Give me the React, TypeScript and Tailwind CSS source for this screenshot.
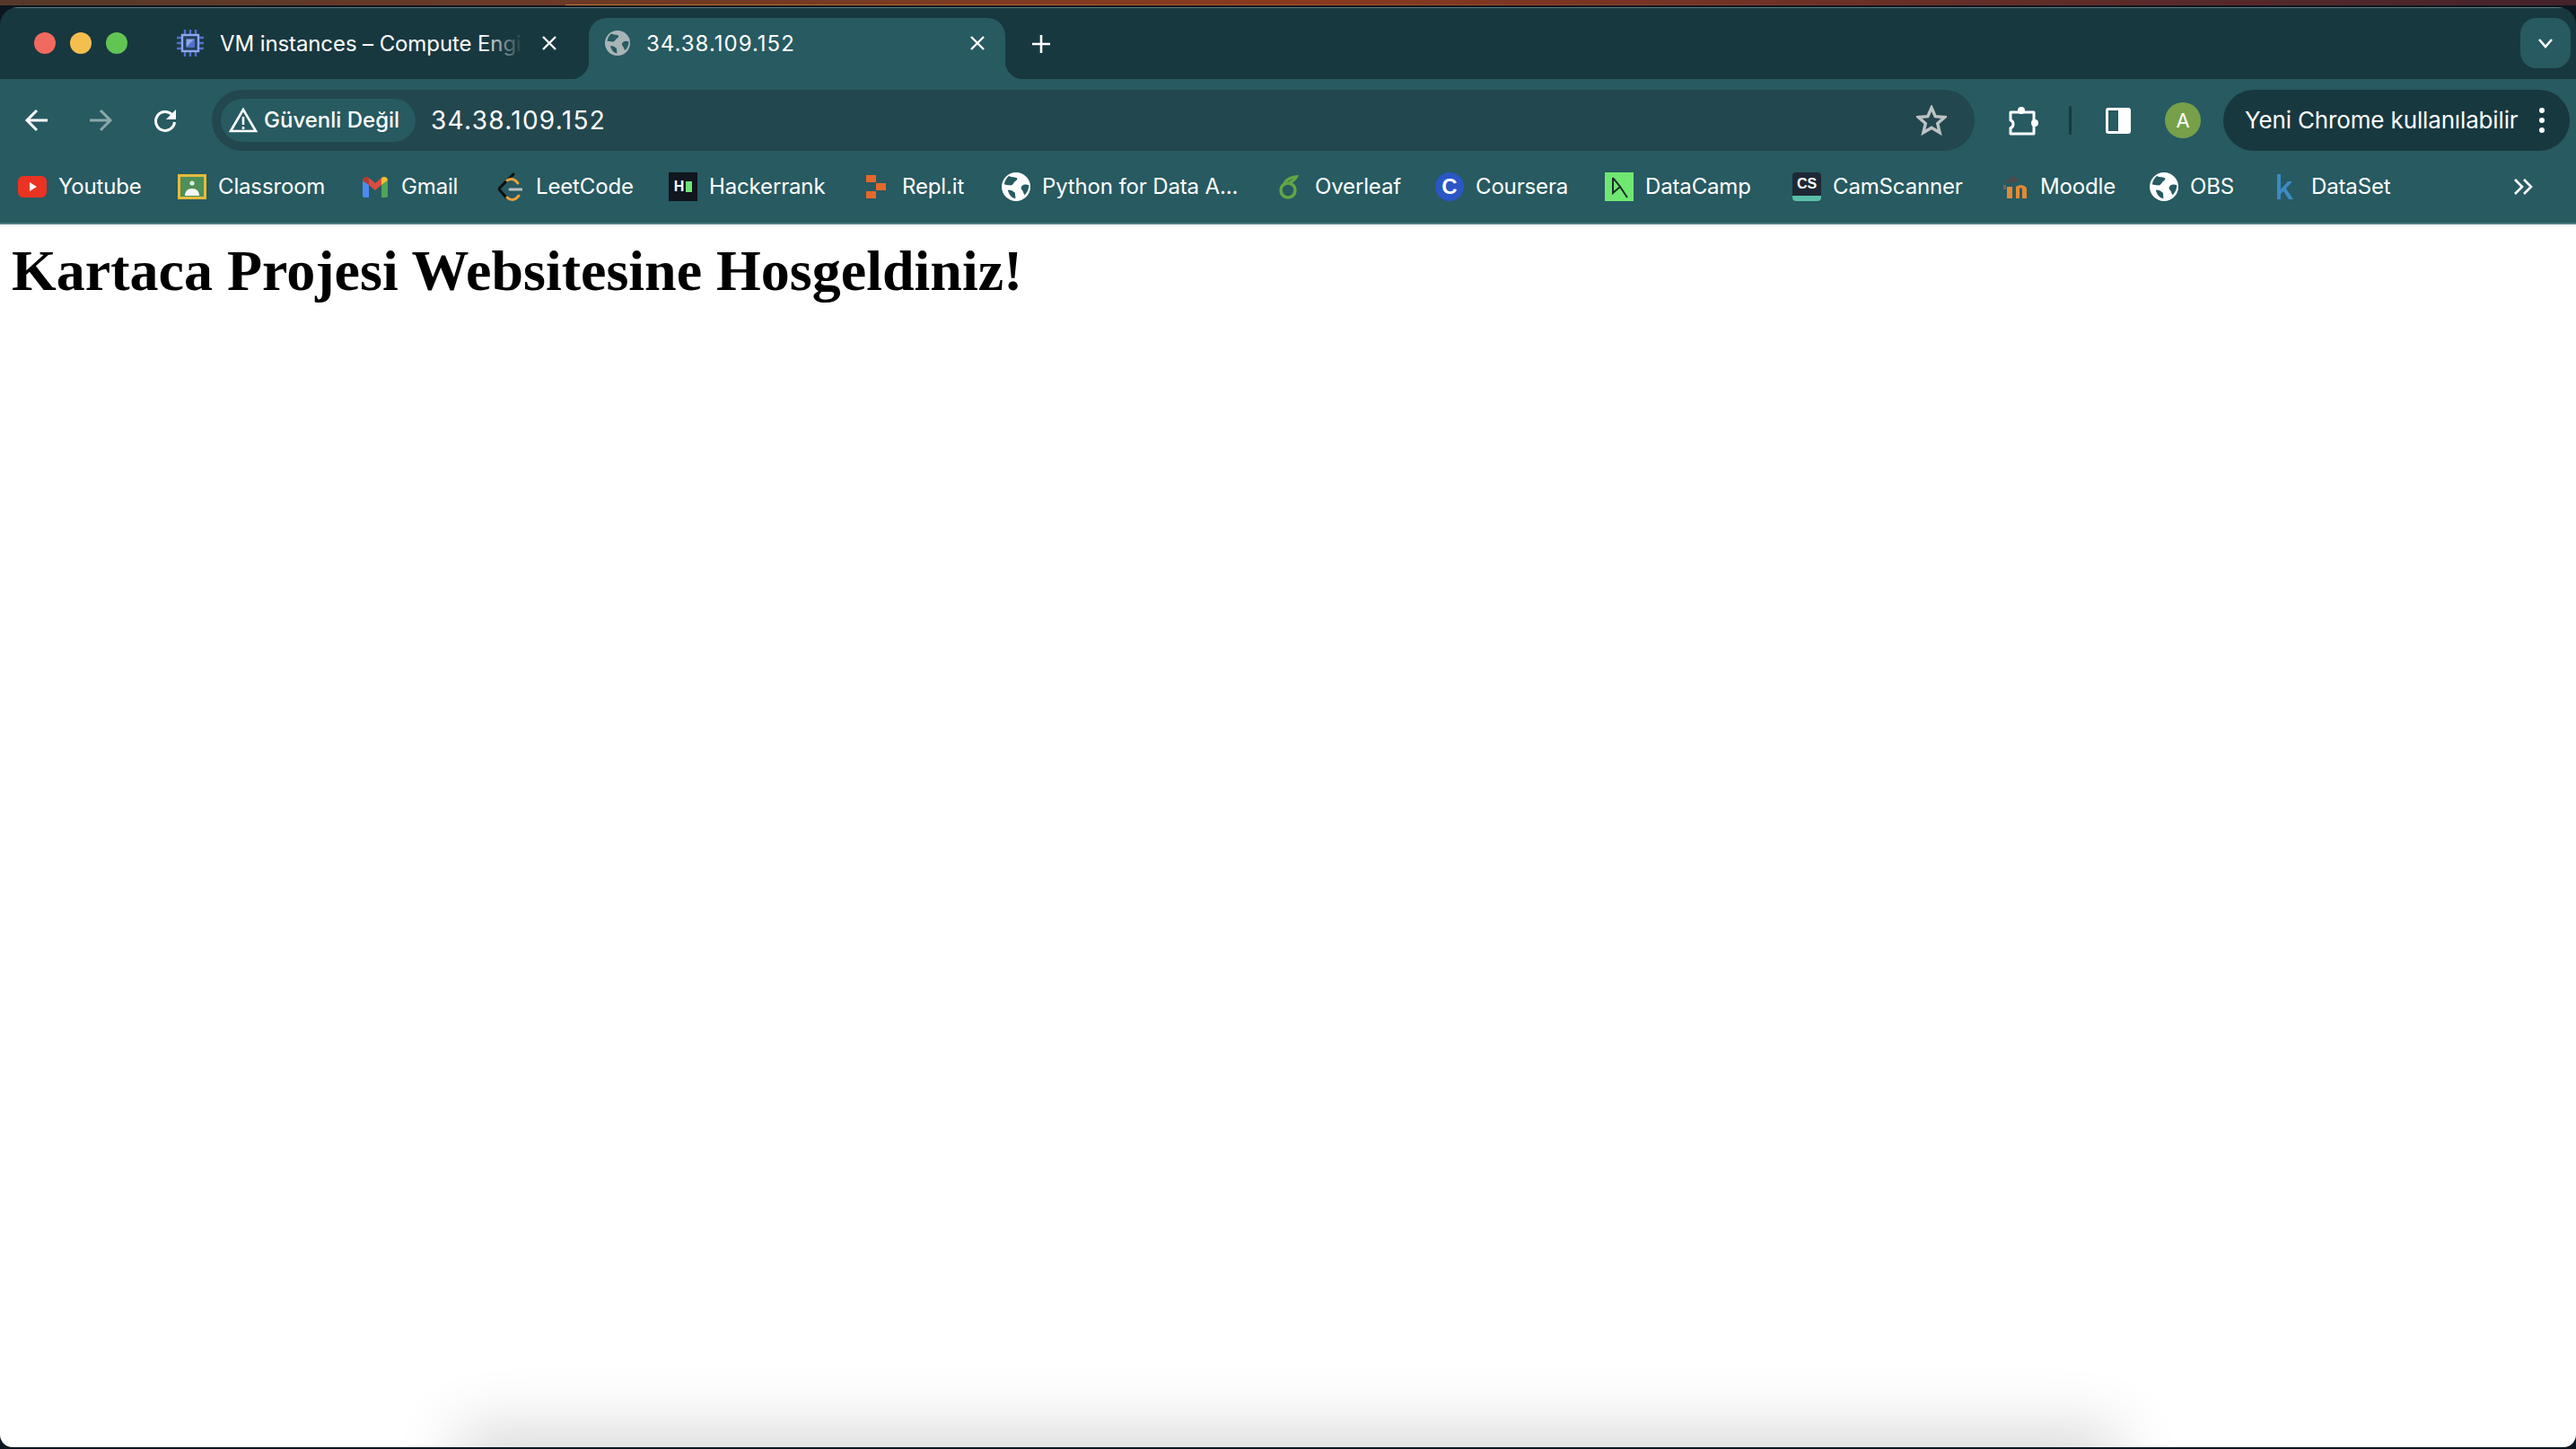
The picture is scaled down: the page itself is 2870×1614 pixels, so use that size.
import React from "react";

const sans = "font-['Inter','Noto_Sans',sans-serif]";

function Globe({ className, color }: { className: string; color: string }) {
  return (
    <svg viewBox="0 0 28 28" className={className}>
      <circle cx="14" cy="14" r="14" fill={color} />
      <path d="M7 3.500c3 1.500 6 1 8 2 1 2-2 3-3 4.500s-2 3-4 2.500-4 0-5.500-1c.5-3 2-6 4.500-8z" fill="#275a61" />
      <path d="M20 13c2-1.500 4.500-1.500 6.500-.5 0 4-1.500 7-4 9.500-1.500-1-1-3-2.500-4.500-1.500-1-1.500-3 0-4.500z" fill="#275a61" />
      <path d="M6 17c3 0 5 1 7 3l.5 5.500C10 25 7 22 6 17z" fill="#275a61" />
    </svg>
  );
}

const Youtube = () => (
  <svg viewBox="0 0 32 32" className="h-8 w-8">
    <rect x="0" y="4" width="32" height="24" rx="6" fill="#ea3323" />
    <path d="M13 11l8 5-8 5z" fill="#fff" />
  </svg>
);

const Classroom = () => (
  <svg viewBox="0 0 32 32" className="h-8 w-8">
    <rect width="32" height="28" y="2" fill="#e6bb3c" />
    <rect x="3" y="5" width="26" height="22" fill="#4f8f58" />
    <circle cx="16" cy="12" r="2.6" fill="#dfeee0" />
    <path d="M8 26c0-5 3-8 8-8s8 3 8 8z" fill="#f4f6f2" />
  </svg>
);

const Gmail = () => (
  <svg viewBox="0 0 30 26" className="h-[26px] w-[30px]">
    <path d="M1 6l7 5v14H3a2 2 0 0 1-2-2z" fill="#4c8bf0" />
    <path d="M29 6l-7 5v14h5a2 2 0 0 0 2-2z" fill="#4ea659" />
    <path d="M8 11l7 6 7-6V3l-7 6-7-6z" fill="#da4d3f" />
    <path d="M1 6c0-4 4-5 7-3v8z" fill="#b53a30" />
    <path d="M29 6c0-4-4-5-7-3v8z" fill="#efc02f" />
  </svg>
);

const LeetCode = () => (
  <svg viewBox="0 0 28 32" className="h-8 w-7" fill="none" strokeLinecap="round">
    <path d="M18 2L3 17c-1 1-1 2 0 3l7 8" stroke="#0c0f10" strokeWidth="3" />
    <path d="M11 28c3 3 7 3 10 1l3-3" stroke="#eda33a" strokeWidth="3" />
    <path d="M11 9c3-2 6-2 9 0l3 3" stroke="#eda33a" strokeWidth="3" />
    <path d="M14 19h13" stroke="#b9bec0" strokeWidth="3" />
  </svg>
);

const Hackerrank = () => (
  <div className="flex h-8 w-8 items-center justify-center gap-[2px] bg-[#11151d]">
    <span className="font-['Liberation_Sans',sans-serif] text-[16px] leading-none font-bold text-white">H</span>
    <span className="h-[12px] w-[7px] bg-[#6fe27a]" />
  </div>
);

const Replit = () => (
  <svg viewBox="0 0 22 26" className="h-[26px] w-[22px]" fill="#e4692a">
    <rect x="0" y="0" width="11" height="8" />
    <rect x="11" y="9" width="11" height="8" />
    <rect x="0" y="18" width="11" height="8" />
  </svg>
);

const Overleaf = () => (
  <svg viewBox="0 0 24 28" className="h-7 w-6" fill="none">
    <circle cx="11" cy="18" r="8" stroke="#62a744" strokeWidth="3.5" />
    <path d="M5 12c1-7 9-11 18-11-2 6-7 10-13 10 2-3 5-5 8-6-5 1-9 4-13 7z" fill="#62a744" />
  </svg>
);

const Coursera = () => (
  <div className="flex h-8 w-8 items-center justify-center rounded-full bg-[#2a56c6]">
    <span className="font-['Liberation_Sans',sans-serif] text-[24px] leading-none font-bold text-white">C</span>
  </div>
);

const DataCamp = () => (
  <svg viewBox="0 0 32 32" className="h-8 w-8">
    <rect width="32" height="32" fill="#6fe871" />
    <path d="M9 6v17l8-7-8-10M17 16l8 12" fill="none" stroke="#1b2a2c" strokeWidth="2" />
  </svg>
);

const CamScanner = () => (
  <div className="flex h-8 w-8 flex-col overflow-hidden rounded-[4px] bg-[#1d2836]">
    <span className="flex h-[26px] items-center justify-center font-['Liberation_Sans',sans-serif] text-[16px] leading-none font-bold text-white">CS</span>
    <span className="h-[6px] bg-[#59bfa6]" />
  </div>
);

const Moodle = () => (
  <svg viewBox="0 0 30 28" className="h-7 w-[30px]">
    <path d="M3 9l12-7 6 5-9 3z" fill="#4b4b4b" />
    <path d="M6 12h-3v5h3z" fill="#6d6a5e" />
    <path d="M7 27V14h6v13zM17 27V14c4-3 12-2 12 3v10h-5V17c0-2-2-2-3-1v11z" fill="#e38a34" />
  </svg>
);

const DataSet = () => (
  <svg viewBox="0 0 18 28" className="h-7 w-[18px]" fill="#3d8ac4">
    <path d="M0 0h4v17l8-9h5l-7 8 8 12h-5l-6-9-3 3v6H0z" />
  </svg>
);

const bookmarks = [
  { label: "Youtube", width: "w-[91px]", icon: <Youtube /> },
  { label: "Classroom", width: "w-[117px]", icon: <Classroom /> },
  { label: "Gmail", width: "w-[63px]", icon: <Gmail /> },
  { label: "LeetCode", width: "w-[106px]", icon: <LeetCode /> },
  { label: "Hackerrank", width: "w-[128px]", icon: <Hackerrank /> },
  { label: "Repl.it", width: "w-[69px]", icon: <Replit /> },
  { label: "Python for Data A...", width: "w-[217px]", icon: <Globe className="h-8 w-8" color="#ffffff" /> },
  { label: "Overleaf", width: "w-[92px]", icon: <Overleaf /> },
  { label: "Coursera", width: "w-[102px]", icon: <Coursera /> },
  { label: "DataCamp", width: "w-[122px]", icon: <DataCamp /> },
  { label: "CamScanner", width: "w-[144px]", icon: <CamScanner /> },
  { label: "Moodle", width: "w-[80px]", icon: <Moodle /> },
  { label: "OBS", width: "w-[48px]", icon: <Globe className="h-8 w-8" color="#ffffff" /> },
  { label: "DataSet", width: "w-[89px]", icon: <DataSet /> },
];

export default function App() {
  return (
    <div className={`relative flex h-[1614px] w-[2870px] flex-col overflow-hidden bg-[#0b1620] ${sans}`}>
      {/* wallpaper peeking over the window */}
      <div className="mb-[2px] flex h-[6px] shrink-0 flex-col justify-end bg-gradient-to-r from-[#55382a] via-[#8a3a1e] to-[#44222a]">
        <div className="ml-[630px] h-px w-[1500px] bg-gradient-to-r from-[#c47a2e] to-transparent" />
      </div>

      <div className="mb-[2px] flex min-h-0 flex-1 flex-col overflow-hidden rounded-t-[20px] rounded-b-[14px]">
        {/* tab strip */}
        <div className="flex h-20 shrink-0 items-start border-t border-[#5c7a7e] bg-[#18383f] pr-[6px] text-[24px] text-white">
          <div className="mt-[27px] ml-[38px] flex w-[116px] shrink-0 gap-4">
            <span className="h-6 w-6 rounded-full bg-[#f2695f]" />
            <span className="h-6 w-6 rounded-full bg-[#f5bf4f]" />
            <span className="h-6 w-6 rounded-full bg-[#61c554]" />
          </div>

          {/* inactive tab */}
          <div className="mt-[11px] flex h-[68px] w-[502px] shrink-0 items-start pl-[43px]">
            <svg viewBox="0 0 30 30" className="mt-[13px] h-[30px] w-[30px] shrink-0" fill="none">
              <path d="M9 0v6M15 0v6M21 0v6M9 24v6M15 24v6M21 24v6M0 9h6M0 15h6M0 21h6M24 9h6M24 15h6M24 21h6" stroke="#4f70d0" strokeWidth="2.4" />
              <rect x="6" y="6" width="18" height="18" fill="#20405c" stroke="#8ea6ec" strokeWidth="2.4" />
              <rect x="10.500" y="10.500" width="9" height="9" fill="#8ea6ec" />
              <path d="M19.500 10.500v9h-9z" fill="#4f70d0" />
            </svg>
            <span className="relative mt-[14px] ml-[18px] w-[332px] leading-[30px] tracking-[-0.1px] whitespace-nowrap">
              VM instances – Compute Engi
              <span className="absolute inset-y-0 right-[-6px] w-12 bg-gradient-to-r from-transparent to-[#18383f]" />
            </span>
            <svg viewBox="0 0 18 18" className="mt-[19px] ml-[26px] h-[18px] w-[18px] shrink-0" stroke="#fff" strokeWidth="2.4">
              <path d="M2 2l14 14M16 2L2 16" />
            </svg>
          </div>

          {/* active tab */}
          <div className="relative mt-[11px] flex h-[68px] w-[464px] shrink-0 items-start rounded-t-[20px] bg-[#275a61] pl-[18px]">
            <span className="absolute bottom-0 left-[-20px] h-5 w-5 bg-[radial-gradient(circle_at_0_0,#18383f_20px,#275a61_20.5px)]" />
            <span className="absolute right-[-20px] bottom-0 h-5 w-5 bg-[radial-gradient(circle_at_100%_0,#18383f_20px,#275a61_20.5px)]" />
            <Globe className="mt-[14px] h-7 w-7 shrink-0" color="#a9b4b6" />
            <span className="mt-[14px] ml-[18px] w-[360px] leading-[30px] tracking-[1px]">34.38.109.152</span>
            <svg viewBox="0 0 18 18" className="mt-[19px] h-[18px] w-[18px] shrink-0" stroke="#fff" strokeWidth="2.4">
              <path d="M2 2l14 14M16 2L2 16" />
            </svg>
          </div>

          <svg viewBox="0 0 22 22" className="mt-[29px] ml-[29px] h-[22px] w-[22px] shrink-0" stroke="#fff" strokeWidth="2.6">
            <path d="M11 1v20M1 11h20" />
          </svg>

          <div className="mt-[11px] ml-auto flex h-[56px] w-[56px] items-center justify-center rounded-[18px] bg-[#275a61]">
            <svg viewBox="0 0 18 12" className="h-3 w-[18px]" fill="none" stroke="#fff" strokeWidth="2.6">
              <path d="M2 2l7 8 7-8" />
            </svg>
          </div>
        </div>

        {/* toolbar */}
        <div className="flex h-[92px] shrink-0 items-center bg-[#275a61] text-white">
          <div className="flex w-[236px] shrink-0 items-center pl-[27px]">
            <svg viewBox="0 0 28 28" className="h-7 w-7" fill="none" stroke="#fff" strokeWidth="3">
              <path d="M26 14H3M14 3L3 14l11 11" />
            </svg>
            <svg viewBox="0 0 28 28" className="ml-[43px] h-7 w-7" fill="none" stroke="#8ba7aa" strokeWidth="3">
              <path d="M2 14h23M14 3l11 11-11 11" />
            </svg>
            <svg viewBox="0 0 28 28" className="ml-[44px] h-7 w-7" fill="none" stroke="#fff" strokeWidth="3">
              <path d="M24.500 16a10.500 10.500 0 1 1-3-8.500l3 3" />
              <path d="M26 2v11H15z" fill="#fff" stroke="none" />
            </svg>
          </div>

          {/* omnibox */}
          <div className="flex h-[68px] w-[1964px] shrink-0 items-center rounded-full bg-[#23474e] pl-[10px]">
            <div className="flex h-[48px] w-[217px] shrink-0 items-center rounded-full bg-[#275a61] pl-[9px]">
              <svg viewBox="0 0 32 30" className="h-[30px] w-8 shrink-0" fill="none" stroke="#fff" strokeWidth="2.6">
                <path d="M16 3L2 27h28zM16 11v9M16 22v3" />
              </svg>
              <span className="ml-[7px] text-[24px] leading-none font-medium whitespace-nowrap">Güvenli Değil</span>
            </div>
            <span className="ml-[17px] text-[28px] leading-none tracking-[1.3px]">34.38.109.152</span>
            <svg viewBox="0 0 34 34" className="mr-[31px] ml-auto h-[34px] w-[34px]" fill="none" stroke="#bdc3c4" strokeWidth="3.4">
              <path d="M17 3l4.2 9.6 10.4 1-7.9 6.9 2.4 10.2-9.1-5.4-9.1 5.4 2.4-10.2-7.9-6.9 10.4-1z" />
            </svg>
          </div>

          {/* right side controls */}
          <svg viewBox="0 0 34 34" className="ml-[37px] h-[34px] w-[34px] shrink-0" fill="none" stroke="#fff" strokeWidth="3" strokeLinejoin="round">
            <path d="M3 8h26v24H3v-6.500c4-1 4-7.500 0-8.500z" />
            <circle cx="15" cy="6" r="4" fill="#fff" stroke="none" />
            <circle cx="30" cy="20" r="4" fill="#fff" stroke="none" />
          </svg>
          <span className="ml-[34px] h-8 w-[3px] shrink-0 rounded-full bg-[#18383f]" />
          <div className="ml-[38px] flex h-[29px] w-[28px] shrink-0 overflow-hidden rounded-[3px] border-[3px] border-white">
            <span className="w-1/2" />
            <span className="w-1/2 bg-white" />
          </div>
          <div className="ml-[38px] flex h-10 w-10 shrink-0 items-center justify-center rounded-full bg-[#77a04a] text-[22px] leading-none">A</div>
          <div className="ml-[25px] flex h-[68px] w-[386px] shrink-0 items-center rounded-full bg-[#18383f] pl-[24px]">
            <span className="w-[328px] text-[26px] leading-none tracking-[-0.15px] whitespace-nowrap">Yeni Chrome kullanılabilir</span>
            <span className="flex flex-col gap-[5px]">
              <span className="h-[6px] w-[6px] rounded-full bg-white" />
              <span className="h-[6px] w-[6px] rounded-full bg-white" />
              <span className="h-[6px] w-[6px] rounded-full bg-white" />
            </span>
          </div>
        </div>

        {/* bookmarks bar */}
        <div className="flex h-[70px] shrink-0 items-center gap-[42px] border-b-2 border-[#4f7d82] bg-[#275a61] pb-3 pl-5 text-[24px] text-white">
          {bookmarks.map((b) => (
            <div key={b.label} className="flex shrink-0 items-center gap-[13px]">
              <span className="flex h-8 w-8 shrink-0 items-center justify-center">{b.icon}</span>
              <span className={`${b.width} leading-none tracking-[-0.15px] whitespace-nowrap`}>{b.label}</span>
            </div>
          ))}
          <svg viewBox="0 0 22 20" className="ml-[94px] h-5 w-[22px]" fill="none" stroke="#fff" strokeWidth="2.6">
            <path d="M2 2l8 8-8 8M12 2l8 8-8 8" />
          </svg>
        </div>

        {/* page */}
        <div className="relative min-h-0 flex-1 bg-white">
          <h1 className="m-0 px-[13px] pt-[5px] font-['Liberation_Serif',serif] text-[64px] leading-[94px] font-bold text-black">
            Kartaca Projesi Websitesine Hosgeldiniz!
          </h1>
          {/* dock shadow falling over the bottom edge */}
          <div className="absolute inset-x-0 bottom-0 h-[100px] overflow-hidden">
            <div className="absolute top-[100px] right-[530px] left-[530px] h-10 shadow-[0_0_70px_20px_rgba(0,0,0,0.16)]" />
          </div>
        </div>
      </div>
    </div>
  );
}
